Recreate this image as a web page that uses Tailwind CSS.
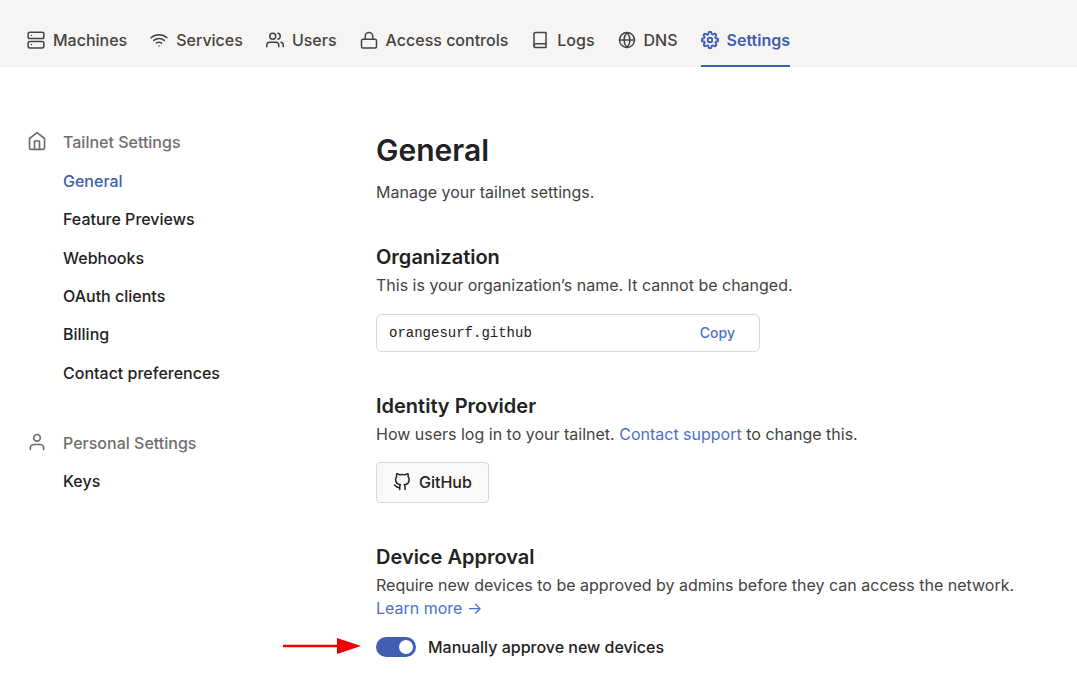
<!DOCTYPE html>
<html lang="en">
<head>
<meta charset="utf-8">
<meta name="viewport" content="width=device-width, initial-scale=1">
<title>General settings</title>
<script src="https://cdn.jsdelivr.net/npm/@tailwindcss/browser@4"></script>
</head>
<body class="min-h-screen overflow-x-hidden bg-white font-['Inter',sans-serif] text-base text-[#444342]">
<header class="border-b border-[#eeebea] bg-[#f7f5f4] px-[27px]">
  <nav aria-label="Main" class="flex gap-[23px] font-medium">
    <a href="#" class="flex items-center gap-2 pt-7 pb-[14px] leading-6"><svg class="size-[18px]" viewBox="0 0 24 24" fill="none" stroke="currentColor" stroke-width="2" stroke-linecap="round" stroke-linejoin="round" aria-hidden="true"><rect x="1.500" y="1.500" width="21" height="8.500" rx="2.500"/><rect x="1.500" y="14" width="21" height="8.500" rx="2.500"/><path d="M6 6h.01M6 18h.01"/></svg>Machines</a>
    <a href="#" class="flex items-center gap-2 pt-7 pb-[14px] leading-6"><svg class="size-[18px]" viewBox="0 0 24 24" fill="none" stroke="currentColor" stroke-width="2" stroke-linecap="round" stroke-linejoin="round" aria-hidden="true"><path d="M5 12.55a11 11 0 0 1 14.08 0M1.42 9a16 16 0 0 1 21.16 0M8.53 16.11a6 6 0 0 1 6.95 0M12 20h.01"/></svg>Services</a>
    <a href="#" class="flex items-center gap-2 pt-7 pb-[14px] leading-6"><svg class="size-[18px]" viewBox="0 0 24 24" fill="none" stroke="currentColor" stroke-width="2" stroke-linecap="round" stroke-linejoin="round" aria-hidden="true"><path d="M17 21v-2a4 4 0 0 0-4-4H5a4 4 0 0 0-4 4v2"/><circle cx="9" cy="7" r="4"/><path d="M23 21v-2a4 4 0 0 0-3-3.87M16 3.13a4 4 0 0 1 0 7.75"/></svg>Users</a>
    <a href="#" class="flex items-center gap-2 pt-7 pb-[14px] leading-6"><svg class="size-[18px]" viewBox="0 0 24 24" fill="none" stroke="currentColor" stroke-width="2" stroke-linecap="round" stroke-linejoin="round" aria-hidden="true"><rect x="2" y="11" width="20" height="11.500" rx="2"/><path d="M7 11V7a5 5 0 0 1 10 0v4"/></svg>Access controls</a>
    <a href="#" class="flex items-center gap-2 pt-7 pb-[14px] leading-6"><svg class="size-[18px]" viewBox="0 0 24 24" fill="none" stroke="currentColor" stroke-width="2" stroke-linecap="round" stroke-linejoin="round" aria-hidden="true"><path d="M4 19.5A2.5 2.5 0 0 1 6.500 17H20"/><path d="M6.500 2H20v20H6.500A2.500 2.500 0 0 1 4 19.500v-15A2.500 2.500 0 0 1 6.500 2z"/></svg>Logs</a>
    <a href="#" class="flex items-center gap-2 pt-7 pb-[14px] leading-6"><svg class="size-[18px]" viewBox="0 0 24 24" fill="none" stroke="currentColor" stroke-width="2" stroke-linecap="round" stroke-linejoin="round" aria-hidden="true"><circle cx="12" cy="12" r="10"/><path d="M2 12h20M12 2a15.300 15.300 0 0 1 4 10 15.300 15.300 0 0 1-4 10 15.300 15.300 0 0 1-4-10 15.300 15.300 0 0 1 4-10z"/></svg>DNS</a>
    <a href="#" aria-current="page" class="-mb-px flex items-center gap-2 border-b-2 border-[#3f5db3] pt-7 pb-[13px] leading-6 font-semibold text-[#3f5db3]"><svg class="size-[18px]" viewBox="0 0 24 24" fill="none" stroke="currentColor" stroke-width="2.500" stroke-linecap="round" stroke-linejoin="round" aria-hidden="true"><circle cx="12" cy="12" r="3"/><path d="M19.400 15a1.650 1.650 0 0 0 .33 1.820l.06.06a2 2 0 1 1-2.830 2.830l-.06-.06a1.650 1.650 0 0 0-2.800 1.170V21a2 2 0 0 1-4 0v-.09a1.650 1.650 0 0 0-2.900-1.180l-.06.06a2 2 0 1 1-2.830-2.830l.06-.06A1.650 1.650 0 0 0 3.090 14H3a2 2 0 0 1 0-4h.09a1.650 1.650 0 0 0 1.180-2.820l-.06-.06a2 2 0 1 1 2.830-2.830l.06.06A1.650 1.650 0 0 0 10 3.090V3a2 2 0 0 1 4 0v.09a1.650 1.650 0 0 0 2.820 1.170l.06-.06a2 2 0 1 1 2.830 2.830l-.06.06A1.650 1.650 0 0 0 20.910 10H21a2 2 0 0 1 0 4h-.09a1.650 1.650 0 0 0-1.510 1z"/></svg>Settings</a>
  </nav>
</header>
<div class="flex px-[27px] pt-16">
  <aside class="w-[349px] shrink-0 font-medium leading-6 text-[#232222]">
    <section class="flex gap-4">
      <svg class="size-5 shrink-0 text-[#706e6d]" viewBox="0 0 24 24" fill="none" stroke="currentColor" stroke-width="2" stroke-linecap="round" stroke-linejoin="round" aria-hidden="true"><path d="M3 9l9-7 9 7v11a2 2 0 0 1-2 2H5a2 2 0 0 1-2-2z"/><path d="M9 22V12h6v10"/></svg>
      <div>
        <h2 class="leading-[22px] text-[#706e6d]">Tailnet Settings</h2>
        <ul class="mt-[9px] grid h-[230px] auto-rows-fr items-center">
          <li><a href="#" aria-current="page" class="text-[#3f5db3]">General</a></li>
          <li><a href="#">Feature Previews</a></li>
          <li><a href="#">Webhooks</a></li>
          <li><a href="#">OAuth clients</a></li>
          <li><a href="#">Billing</a></li>
          <li><a href="#">Contact preferences</a></li>
        </ul>
      </div>
    </section>
    <section class="mt-10 flex gap-4">
      <svg class="size-5 shrink-0 text-[#706e6d]" viewBox="0 0 24 24" fill="none" stroke="currentColor" stroke-width="2" stroke-linecap="round" stroke-linejoin="round" aria-hidden="true"><path d="M20 21v-2a4 4 0 0 0-4-4H8a4 4 0 0 0-4 4v2"/><circle cx="12" cy="7" r="4"/></svg>
      <div>
        <h2 class="leading-[22px] text-[#706e6d]">Personal Settings</h2>
        <ul class="mt-[15px]"><li><a href="#">Keys</a></li></ul>
      </div>
    </section>
  </aside>
  <main class="min-w-0 flex-1">
    <h1 class="text-3xl leading-[38px] font-semibold text-[#232222]">General</h1>
    <p class="mt-[11px] leading-6">Manage your tailnet settings.</p>
    <section class="mt-[39px]">
      <h2 class="mb-[3px] text-xl font-semibold text-[#232222]">Organization</h2>
      <p class="leading-[23px]">This is your organization’s name. It cannot be changed.</p>
      <div class="mt-[17px] flex max-w-96 items-center rounded-md border border-[#dad6d5] py-2 pr-6 pl-3">
        <input type="text" readonly aria-label="Organization name" value="orangesurf.github" class="min-w-0 flex-1 font-['Liberation_Mono',monospace] text-sm text-[#232222] outline-none">
        <button type="button" class="text-sm font-medium text-[#4b70cc]">Copy</button>
      </div>
    </section>
    <section class="mt-10">
      <h2 class="mb-[3px] text-xl font-semibold text-[#232222]">Identity Provider</h2>
      <p class="leading-[23px]">How users log in to your tailnet. <a href="#" class="text-[#4b70cc]">Contact support</a> to change this.</p>
      <button type="button" class="mt-4 flex items-center gap-2 rounded border border-[#dad6d5] bg-[#faf9f8] px-4 pt-[7px] pb-2 font-medium text-[#232222]"><svg class="size-[18px]" viewBox="0 0 24 24" fill="none" stroke="currentColor" stroke-width="2" stroke-linecap="round" stroke-linejoin="round" aria-hidden="true"><path d="M9 19c-5 1.500-5-2.500-7-3m14 6v-3.870a3.370 3.370 0 0 0-.94-2.610c3.140-.35 6.440-1.540 6.440-7A5.440 5.440 0 0 0 20 4.770 5.070 5.070 0 0 0 19.910 1S18.730.65 16 2.480a13.380 13.380 0 0 0-7 0C6.270.65 5.090 1 5.090 1A5.070 5.070 0 0 0 5 4.770a5.440 5.440 0 0 0-1.500 3.780c0 5.420 3.300 6.610 6.440 7A3.370 3.370 0 0 0 9 18.130V22"/></svg>GitHub</button>
    </section>
    <section class="mt-10">
      <h2 class="mb-[3px] text-xl font-semibold text-[#232222]">Device Approval</h2>
      <p class="leading-[23px]">Require new devices to be approved by admins before they can access the network.<br><a href="#" class="text-[#4b70cc]">Learn more →</a></p>
      <div class="relative mt-[15px] flex items-center">
        <svg class="absolute top-[3px] right-full mr-[15px] h-4 w-[78px]" viewBox="0 0 78 16" aria-hidden="true"><path d="M0 8h56" stroke="#ee0000" stroke-width="2.500"/><path d="M54 0l24 8-24 8z" fill="#ee0000"/></svg>
        <label class="flex items-center gap-3 font-medium leading-6 text-[#232222]">
          <input type="checkbox" role="switch" checked class="h-5 w-10 appearance-none rounded-full bg-[#dad6d5] p-[3px] before:block before:size-[14px] before:rounded-full before:bg-white checked:bg-[#3f5db3] checked:before:ml-5">
          Manually approve new devices
        </label>
      </div>
    </section>
  </main>
</div>
</body>
</html>
